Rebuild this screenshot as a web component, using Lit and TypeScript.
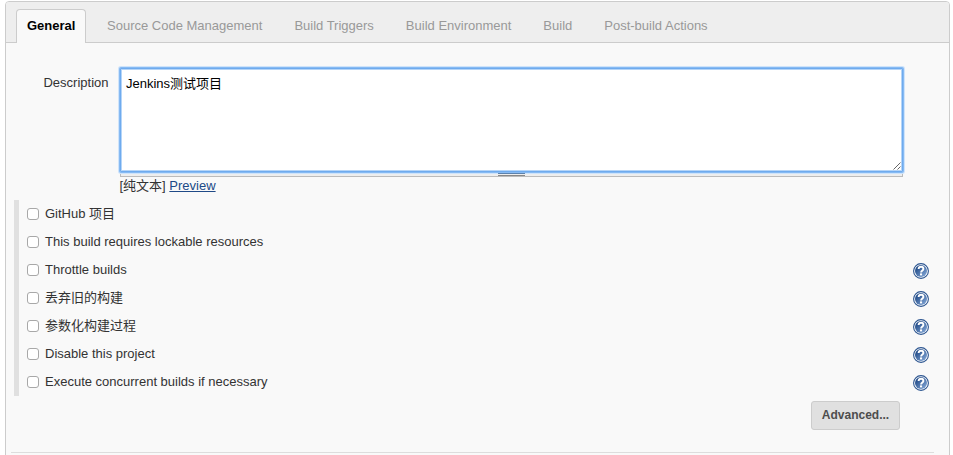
import { LitElement, html, css, nothing } from "lit";
import { customElement, property } from "lit/decorators.js";

interface Option {
  label: string;
  help: boolean;
}

const TABS = [
  "General",
  "Source Code Management",
  "Build Triggers",
  "Build Environment",
  "Build",
  "Post-build Actions",
];

const OPTIONS: Option[] = [
  { label: "GitHub 项目", help: false },
  { label: "This build requires lockable resources", help: false },
  { label: "Throttle builds", help: true },
  { label: "丢弃旧的构建", help: true },
  { label: "参数化构建过程", help: true },
  { label: "Disable this project", help: true },
  { label: "Execute concurrent builds if necessary", help: true },
];

@customElement("help-icon")
export class HelpIcon extends LitElement {
  static styles = css`
    :host {
      display: block;
      width: 16px;
      height: 16px;
    }
    svg {
      display: block;
    }
  `;

  render() {
    return html`
      <svg width="16" height="16" viewBox="0 0 16 16" aria-label="Help">
        <defs>
          <linearGradient id="g" x1="0" y1="0" x2="1" y2="1">
            <stop offset="0.15" stop-color="#204a87" />
            <stop offset="0.9" stop-color="#7fa3d3" />
          </linearGradient>
        </defs>
        <circle cx="8" cy="8" r="7.4" fill="#fff" stroke="#2c5590" stroke-width="1.1" />
        <circle cx="8" cy="8" r="6" fill="url(#g)" />
        <path
          d="M5.6 6C5.7 4.6 6.6 3.8 8.1 3.8C9.6 3.8 10.4 4.7 10.4 5.9C10.4 7.4 8.1 7.5 8.1 9.4"
          fill="none"
          stroke="#fff"
          stroke-width="1.9"
        />
        <rect x="7" y="10.4" width="2.1" height="2" fill="#fff" />
      </svg>
    `;
  }
}

@customElement("option-row")
export class OptionRow extends LitElement {
  @property() label = "";
  @property({ type: Boolean }) help = false;

  static styles = css`
    :host {
      display: flex;
      align-items: center;
      justify-content: space-between;
      height: 28px;
      box-sizing: border-box;
      padding: 0 20px 0 8px;
    }
    .choice {
      display: flex;
      align-items: center;
      gap: 6px;
      line-height: 28px;
    }
    .box {
      appearance: none;
      box-sizing: border-box;
      width: 12px;
      height: 12px;
      margin: 0;
      border: 1px solid #a8a8a8;
      border-radius: 3px;
      background: #fff;
    }
    .help {
      margin-top: 2px;
    }
  `;

  render() {
    return html`
      <label class="choice"><input class="box" type="checkbox" /><span>${this.label}</span></label>
      ${this.help ? html`<help-icon class="help"></help-icon>` : nothing}
    `;
  }
}

@customElement("app-root")
export class AppRoot extends LitElement {
  static styles = css`
    :host {
      display: block;
      height: 455px;
      box-sizing: border-box;
      padding: 1px 3px 0 5px;
      overflow: hidden;
      background: #fff;
      color: #333;
      font: 13px/16px "Liberation Sans", "Noto Sans CJK SC", sans-serif;
    }
    .panel {
      box-sizing: border-box;
      height: 460px;
      border: 1px solid #ccc;
      border-radius: 4px;
      background: #f9f9f9;
    }
    .tabs {
      display: flex;
      align-items: flex-end;
      box-sizing: border-box;
      height: 41px;
      padding-left: 10px;
      border-bottom: 1px solid #ccc;
      border-radius: 3px 3px 0 0;
      background: #eee;
    }
    .tab {
      box-sizing: border-box;
      height: 34px;
      padding: 10px 16px 0;
      color: #999;
      white-space: nowrap;
    }
    .tab.active {
      width: 70px;
      margin: 0 5px -1px 0;
      padding: 8px 0 0 10px;
      border: 1px solid #ccc;
      border-bottom: 0;
      border-radius: 4px 4px 0 0;
      background: #f9f9f9;
      color: #000;
      font-weight: bold;
    }
    .description {
      display: flex;
      padding: 25px 46px 0 0;
    }
    .name {
      width: 102.5px;
      margin-right: 11.5px;
      padding-top: 7px;
      text-align: right;
    }
    .field {
      flex: 1;
    }
    .editor {
      position: relative;
      height: 104px;
    }
    .text {
      display: block;
      box-sizing: border-box;
      width: 100%;
      height: 104px;
      margin: 0;
      padding: 7px 5px;
      border: 1px solid #6fabee;
      outline: none;
      box-shadow: 0 0 0 1px #86baf3, 0 0 0 2px #cfe4fb, inset 0 0 0 1px #b5d5f8;
      border-radius: 1px;
      resize: none;
      background: #fff;
      color: #000;
      font: inherit;
    }
    .corner {
      position: absolute;
      right: 2px;
      bottom: 2px;
    }
    .handle {
      display: flex;
      justify-content: center;
      box-sizing: border-box;
      height: 5px;
      border: 1px solid #bbb;
      border-top: 0;
      background: #eee;
    }
    .grip {
      position: relative;
      box-sizing: border-box;
      width: 27px;
      height: 3px;
      margin-top: 1px;
      border-top: 1px solid #5c82ad;
      border-bottom: 1px solid #888;
    }
    .markup {
      margin-left: -0.5px;
      padding-top: 1px;
      white-space: nowrap;
    }
    .preview {
      color: #204a87;
      text-decoration: underline;
    }
    .options {
      height: 196px;
      margin: 6px 0 0 8px;
      border-left: 5px solid #e0e0e0;
    }
    .actions {
      display: flex;
      justify-content: flex-end;
      padding: 5px 49px 0 0;
    }
    .advanced {
      box-sizing: border-box;
      width: 89px;
      height: 29px;
      padding: 0 0 2px;
      border: 1px solid #ccc;
      border-radius: 3px;
      background: #e0e0e0;
      color: #4d4d4d;
      font: bold 12px/26px "Liberation Sans", sans-serif;
    }
    .rule {
      height: 1px;
      margin: 22px 15px 0 5px;
      background: #ddd;
    }
  `;

  render() {
    return html`
      <div class="panel">
        <nav class="tabs">
          ${TABS.map((t, i) => html`<div class="tab ${i === 0 ? "active" : ""}">${t}</div>`)}
        </nav>
        <div class="description">
          <div class="name">Description</div>
          <div class="field">
            <div class="editor">
              <textarea class="text" spellcheck="false" .value=${"Jenkins测试项目"}></textarea>
              <svg class="corner" width="8" height="8" viewBox="0 0 8 8">
                <path d="M0.5 7.5L7.5 0.5M4.5 7.5L7.5 4.5" stroke="#555" stroke-width="0.9" fill="none" />
              </svg>
            </div>
            <div class="handle"><div class="grip"></div></div>
            <div class="markup">[纯文本] <a class="preview">Preview</a></div>
          </div>
        </div>
        <div class="options">
          ${OPTIONS.map((o) => html`<option-row .label=${o.label} ?help=${o.help}></option-row>`)}
        </div>
        <div class="actions"><button class="advanced">Advanced...</button></div>
        <div class="rule"></div>
      </div>
    `;
  }
}
